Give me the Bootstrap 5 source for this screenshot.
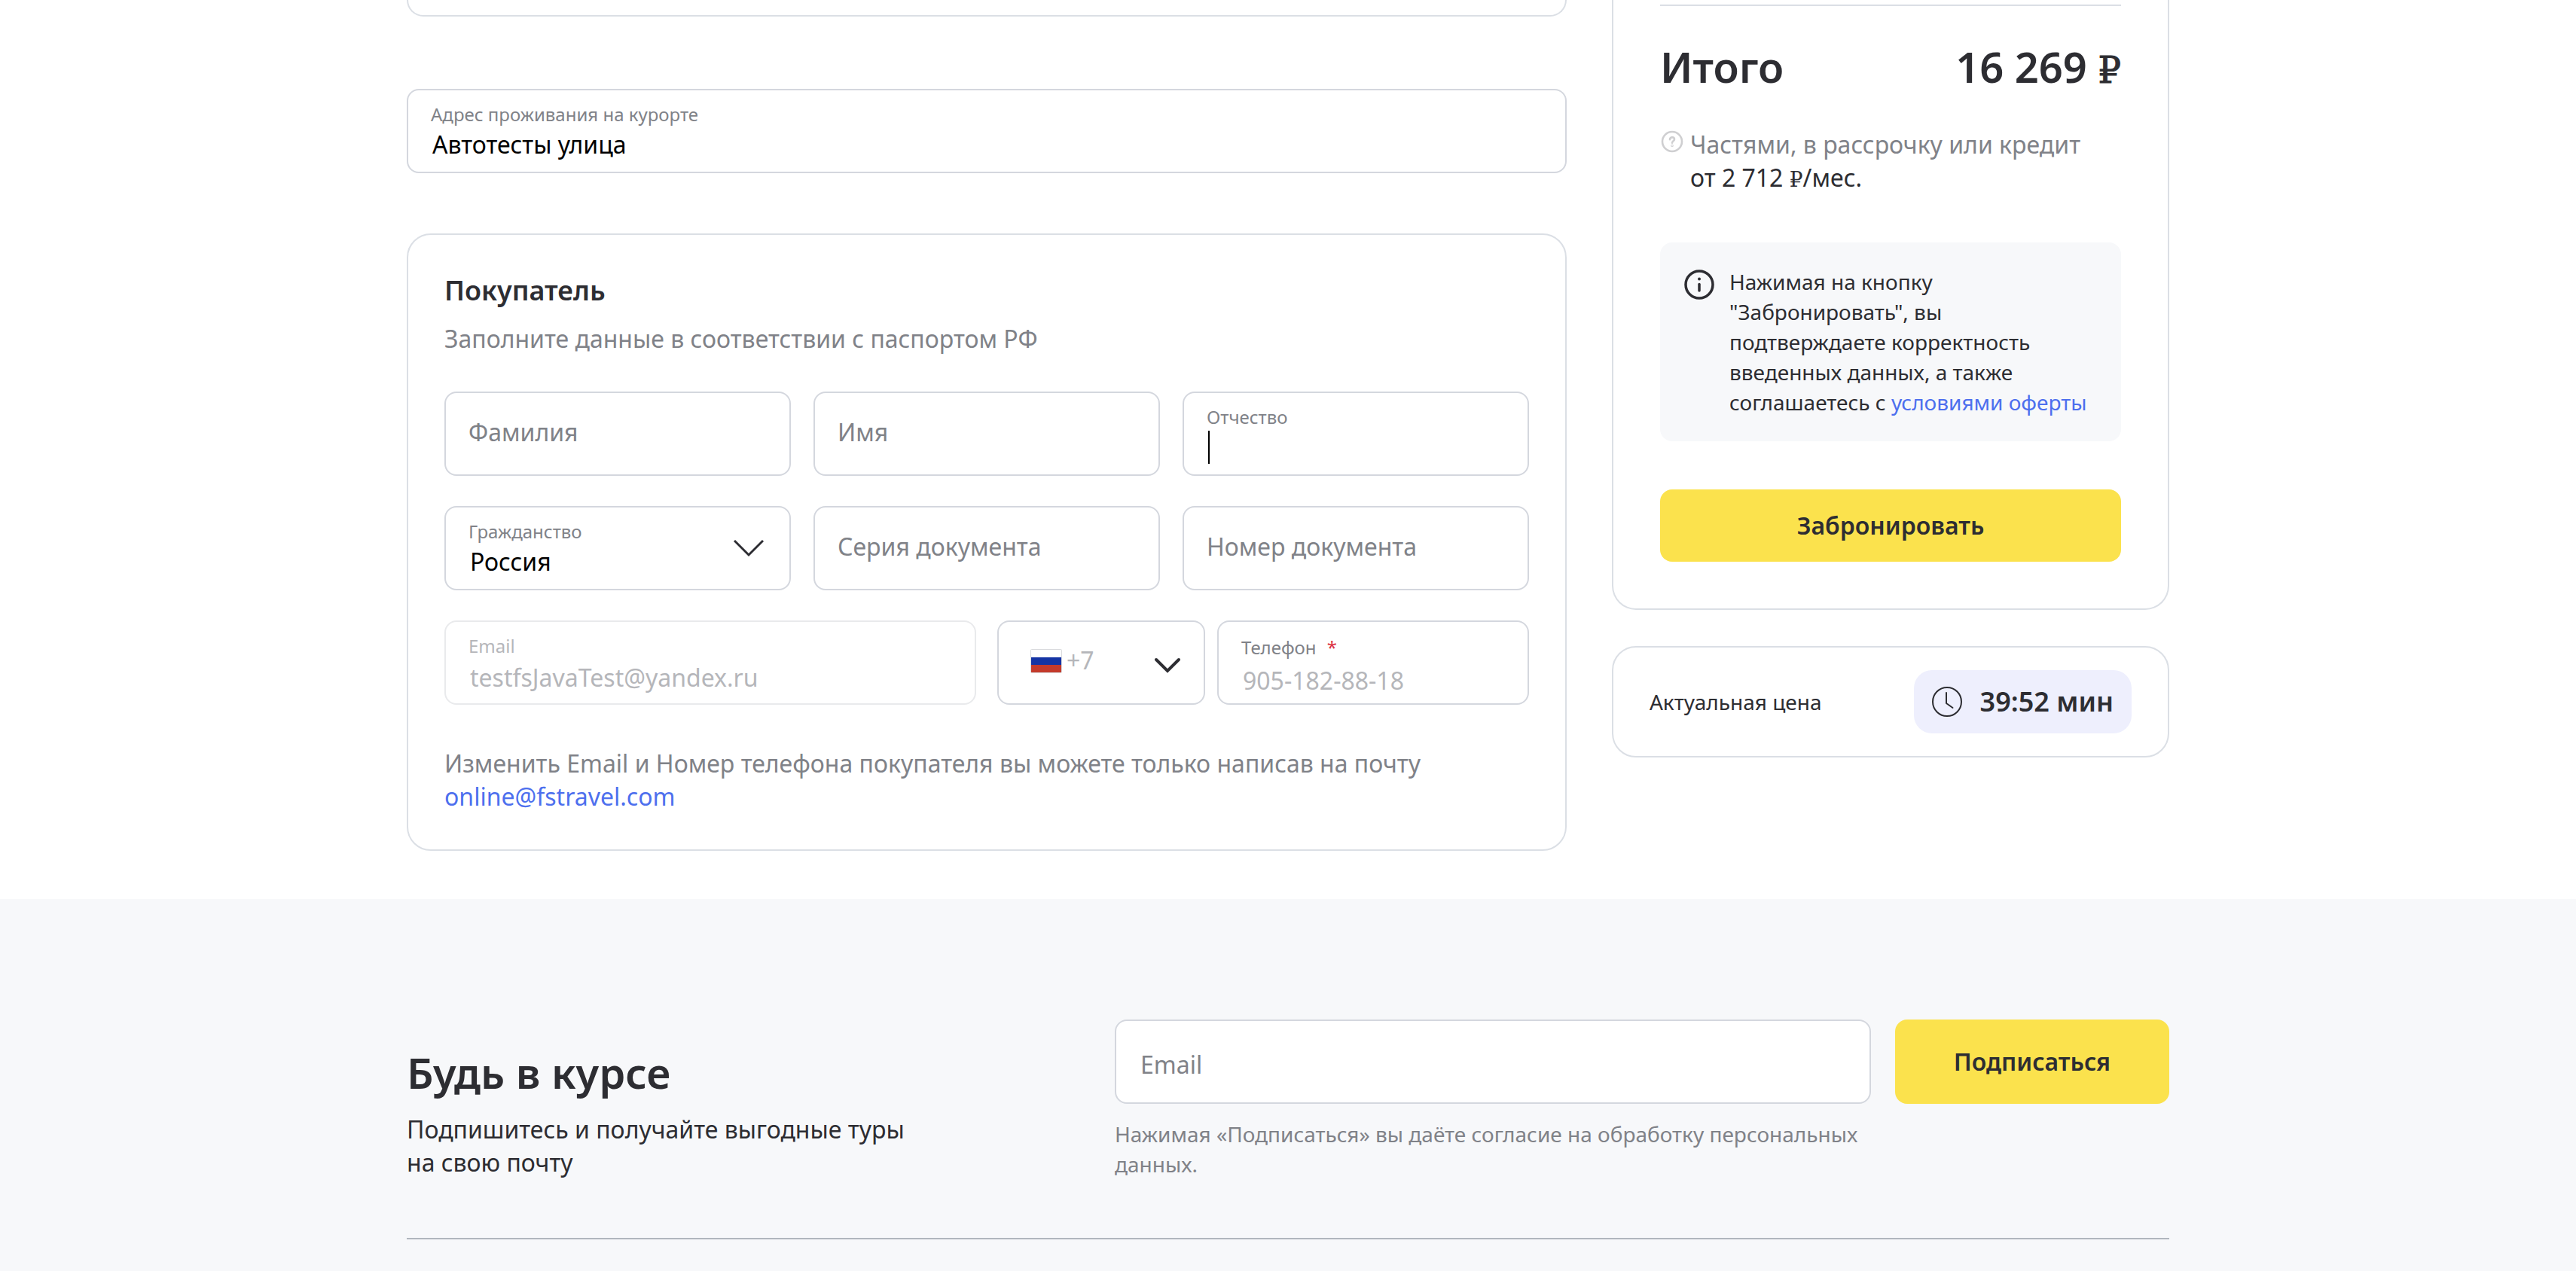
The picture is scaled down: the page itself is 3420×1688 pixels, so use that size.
<!DOCTYPE html>
<html lang="ru">
<head>
<meta charset="utf-8">
<meta name="viewport" content="width=device-width, initial-scale=1">
<title>Бронирование</title>
<link href="https://cdn.jsdelivr.net/npm/bootstrap@5.3.0/dist/css/bootstrap.min.css" rel="stylesheet">
<style>
  :root { --ink: #2d2d32; --muted: #808288; --line: #dbdfe5; --field-line: #d4d7de; --soft: #f7f8fa; --sun: #fbe24d; --blue: #4d6fee; }
  body { font-family: "Noto Sans", "Open Sans", sans-serif; font-size: 32px; line-height: 44px; color: var(--ink); background: #fff; }
  a { color: var(--blue); text-decoration: none; }
  .page-wrap { width: 100%; max-width: 2380px; margin: 0 auto; padding: 0 20px; }
  .booking-grid { grid-template-columns: minmax(0, 77fr) minmax(0, 37fr); gap: 60px; padding-bottom: 64px; }
  .panel { border: 2px solid var(--line); border-radius: 32px; background: #fff; }
  .panel-tail { border-top: 0; border-top-left-radius: 0; border-top-right-radius: 0; }
  .guest-tail { height: 22px; margin-bottom: 96px; }
  .text-soft { color: var(--muted); }
  .title-md { font-size: 36px; line-height: 48px; font-weight: 600; margin: 0; }
  .title-lg { font-size: 56px; line-height: 72px; font-weight: 600; margin: 0; }
  .small-copy { font-size: 28px; line-height: 40px; }
  .rouble { font-family: "DejaVu Serif", serif; line-height: 1; font-size: 28px; }
  .title-lg .rouble { font-size: 48px; font-weight: 400; -webkit-text-stroke: 1px currentColor; }

  .field { position: relative; height: 112px; border: 2px solid var(--field-line); border-radius: 16px; background: #fff; padding: 16px 30px 0; }
  .field label { display: block; font-size: 24px; line-height: 32px; color: var(--muted); }
  .field input, .field select { display: block; width: 100%; height: 44px; margin-top: 2px; padding: 0 2px; border: 0; outline: 0; background-color: transparent; color: #000; font-size: 32px; line-height: 44px; appearance: none; opacity: 1; }
  .field-empty { display: grid; padding: 0; }
  .field-empty label, .field-empty input { grid-area: 1 / 1; }
  .field-empty label { align-self: start; padding: 30px 30px 0; font-size: 32px; line-height: 44px; pointer-events: none; z-index: 1; }
  .field-empty input { height: 100%; margin: 0; padding: 0 30px; border-radius: 14px; }
  .field-lower label { padding: 36px 32px 0; }
  .field-off { border-color: #e9eaec; }
  .field-off label, .field .value-off { color: #b5b6ba; }
  .field-off input { margin-top: 4px; }
  .field .with-caret { background: linear-gradient(#000, #000) 2px 0 / 2px 100% no-repeat; }
  .field-phone { padding-top: 18px; }
  .field-phone input { margin-top: 6px; }
  .chevron { position: absolute; pointer-events: none; }
  .chevron-thin { right: 34px; top: 40px; }
  .chevron-bold { right: 30px; top: 44px; }
  .flag { position: absolute; left: 42px; top: 36px; }
  .field-code { padding: 0; }
  .field-code select { height: 100%; margin: 0; padding: 0 80px 6px 90px; border-radius: 14px; }

  .buyer { margin-top: 80px; padding: 50px 48px 48px; }
  .buyer-hint { margin: 18px 0 0; }
  .fields-grid { grid-template-columns: repeat(3, minmax(0, 1fr)); gap: 40px 30px; margin: 48px 0 40px; }
  .contact-row { grid-template-columns: repeat(2, minmax(0, 1fr)); gap: 28px; margin-bottom: 56px; }
  .phone-row { grid-template-columns: minmax(0, 2fr) minmax(0, 3fr); gap: 16px; }

  .summary { padding: 6px 62px 62px; }
  .rule { height: 2px; margin: 0; border: 0; opacity: 1; background: var(--line); }
  .total { margin-top: 44px; }
  .parts { gap: 8px; margin: 46px 0 64px; }
  .parts svg { margin-top: 2px; }
  .notice { background: var(--soft); border-radius: 16px; padding: 32px; gap: 20px; margin-bottom: 64px; }
  .notice svg { margin-top: 4px; }
  .btn-sun { background: var(--sun); color: var(--ink); border: 0; border-radius: 16px; font-size: 32px; line-height: 44px; font-weight: 600; }
  .btn-sun:hover { background: #f6da38; }
  .btn-book { padding: 26px; }
  .timer { margin-top: 48px; padding: 30px 48px; }
  .timer-pill { height: 84px; background: #eeeffd; border-radius: 24px; padding: 0 24px; gap: 24px; font-size: 36px; font-weight: 600; }

  .subscribe { background: var(--soft); padding-top: 160px; }
  .subscribe-grid { grid-template-columns: minmax(0, 47fr) minmax(0, 70fr); margin-bottom: 78px; }
  .subscribe-text { padding-top: 34px; padding-right: 240px; }
  .subscribe-text p { margin: 18px 0 0; }
  .subscribe-form { grid-template-columns: minmax(0, 1fr) auto; column-gap: 32px; row-gap: 20px; }
  .btn-subscribe { padding: 34px 78px; }
  .rule-dark { background: #b1b6be; }
  @media (max-width: 1400px) {
    .booking-grid, .subscribe-grid { grid-template-columns: minmax(0, 1fr); }
  }
</style>
<script src="https://cdn.jsdelivr.net/npm/bootstrap@5.3.0/dist/js/bootstrap.bundle.min.js"></script>
</head>
<body class="d-flex flex-column min-vh-100">
<main class="page-wrap">
  <div class="booking-grid d-grid align-items-start">
    <form>
      <div class="panel panel-tail guest-tail"></div>
      <div class="field">
        <label for="address">Адрес проживания на курорте</label>
        <input id="address" type="text" value="Автотесты улица">
      </div>

      <section class="panel buyer">
        <h2 class="title-md">Покупатель</h2>
        <p class="text-soft buyer-hint">Заполните данные в соответствии с паспортом РФ</p>
        <div class="fields-grid d-grid">
          <div class="field field-empty"><label for="surname">Фамилия</label><input id="surname" type="text"></div>
          <div class="field field-empty"><label for="firstname">Имя</label><input id="firstname" type="text"></div>
          <div class="field"><label for="patronymic">Отчество</label><input id="patronymic" class="with-caret" type="text"></div>
          <div class="field">
            <label for="citizenship">Гражданство</label>
            <select id="citizenship"><option>Россия</option></select>
            <svg class="chevron chevron-thin" width="40" height="28" viewBox="0 0 40 28" fill="none" stroke="#2d2d32" stroke-width="3"><path d="M1 4l19 19L39 4"/></svg>
          </div>
          <div class="field field-empty"><label for="series">Серия документа</label><input id="series" type="text"></div>
          <div class="field field-empty"><label for="docnum">Номер документа</label><input id="docnum" type="text"></div>
        </div>
        <div class="contact-row d-grid">
          <div class="field field-off">
            <label for="email">Email</label>
            <input id="email" class="value-off" type="email" value="testfsJavaTest@yandex.ru" disabled>
          </div>
          <div class="phone-row d-grid">
            <div class="field field-code">
              <select class="value-off" aria-label="Код страны" disabled><option>+7</option></select>
              <svg class="flag" width="42" height="32" viewBox="0 0 42 32"><rect x="0.5" y="0.5" width="41" height="31" rx="1" fill="#fff" stroke="#d9dadd"/><rect x="1" y="11" width="40" height="10" fill="#1434a4"/><rect x="1" y="21" width="40" height="10" fill="#c43a2b"/></svg>
              <svg class="chevron chevron-bold" width="36" height="26" viewBox="0 0 36 26" fill="none" stroke="#2d2d32" stroke-width="4" stroke-linecap="round"><path d="M3 6l15 15L33 6"/></svg>
            </div>
            <div class="field field-phone">
              <label for="phone">Телефон <span class="text-danger ms-2">*</span></label>
              <input id="phone" class="value-off" type="tel" value="905-182-88-18" disabled>
            </div>
          </div>
        </div>
        <p class="text-soft mb-0">Изменить Email и Номер телефона покупателя вы можете только написав на почту <a class="d-block" href="mailto:online@fstravel.com">online@fstravel.com</a></p>
      </section>
    </form>

    <aside>
      <section class="panel panel-tail summary">
        <hr class="rule">
        <div class="total title-lg d-flex justify-content-between">
          <span>Итого</span><span>16 269 <span class="rouble">₽</span></span>
        </div>
        <div class="parts d-flex align-items-start">
          <svg class="flex-shrink-0" width="32" height="32" viewBox="0 0 32 32" fill="none" stroke="#cfcfd1" stroke-width="2.6" stroke-linecap="round"><circle cx="16" cy="16" r="13"/><path d="M13 13.200c0-3.800 6-3.600 6-.2 0 2.200-3 2.400-3 4.800"/><circle cx="16" cy="21.500" r=".5"/></svg>
          <div><span class="text-soft">Частями, в рассрочку или кредит</span><br>от 2 712 <span class="rouble">₽</span>/мес.</div>
        </div>
        <div class="notice small-copy d-flex align-items-start">
          <svg class="flex-shrink-0" width="40" height="40" viewBox="0 0 40 40" fill="none" stroke="#2d2d32" stroke-width="3.500" stroke-linecap="round"><circle cx="20" cy="20" r="18"/><path d="M20 19.500v8.500"/><circle cx="20" cy="12.500" r="2" fill="#2d2d32" stroke="none"/></svg>
          <div>Нажимая на кнопку "Забронировать", вы подтверждаете корректность введенных данных, а также соглашаетесь с <a href="#offer">условиями оферты</a></div>
        </div>
        <button type="button" class="btn btn-sun btn-book w-100">Забронировать</button>
      </section>
      <section class="panel timer d-flex align-items-center justify-content-between small-copy">
        <span>Актуальная цена</span>
        <span class="timer-pill d-flex align-items-center">
          <svg width="40" height="40" viewBox="0 0 40 40" fill="none" stroke="#2d2d32" stroke-width="2"><circle cx="20" cy="20" r="19"/><path d="M19 8v14l8.500 6" stroke-linecap="round" stroke-linejoin="round"/></svg>
          <span>39:52 мин</span>
        </span>
      </section>
    </aside>
  </div>
</main>

<footer class="subscribe flex-grow-1">
  <div class="page-wrap">
    <div class="subscribe-grid d-grid">
      <div class="subscribe-text">
        <h2 class="title-lg">Будь в курсе</h2>
        <p>Подпишитесь и получайте выгодные туры на свою почту</p>
      </div>
      <form class="subscribe-form d-grid align-content-start">
        <div class="field field-empty field-lower"><label for="news">Email</label><input id="news" type="email"></div>
        <button type="button" class="btn btn-sun btn-subscribe">Подписаться</button>
        <p class="text-soft small-copy mb-0">Нажимая «Подписаться» вы даёте согласие на обработку персональных данных.</p>
      </form>
    </div>
    <hr class="rule rule-dark">
  </div>
</footer>
</body>
</html>
